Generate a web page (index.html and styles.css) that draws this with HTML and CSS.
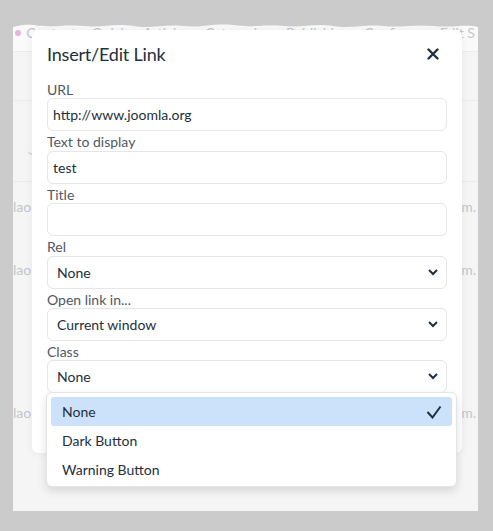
FILE: index.html
```html
<!DOCTYPE html>
<html lang="en">

<head>
    <meta charset="UTF-8">
    <meta name="viewport" content="width=device-width, initial-scale=1.0">
    <title>Insert/Edit Link</title>
    <link rel="stylesheet" href="styles.css">
</head>

<body>
    <div class="shot">
        <svg class="tear" width="465" height="8" viewBox="0 0 465 8" preserveAspectRatio="none">
            <path d="M0 0 H465 V5 C450 2 440 6 420 4 C400 2 390 6 370 4 C350 2 340 7 320 4 C300 1 290 6 270 4 C250 2 240 6 220 3 C200 1 190 6 170 4 C150 2 140 7 120 4 C100 1 90 6 70 4 C50 2 40 6 20 3 C10 2 5 4 0 5 Z" fill="#cbcbcb"/>
        </svg>

        <div class="page">
            <div class="menubar">
                <span class="dot"></span>
                <span>Content</span>
                <span>Quick</span>
                <span>Articles</span>
                <span>Categories</span>
                <span>Publishing</span>
                <span>Configure</span>
                <span>Edit S</span>
            </div>
            <div class="toolbar"></div>
            <div class="filters"><span class="faint-chevron">&#8964;</span></div>
            <div class="row"><span>lao</span><span>m.</span></div>
            <div class="row"><span>lao</span><span>m.</span></div>
            <div class="row row-last"><span>lao</span><span>m.</span></div>
        </div>

        <div class="dialog">
            <div class="dialog-head">
                <h1>Insert/Edit Link</h1>
                <button class="close" aria-label="Close">
                    <svg width="12" height="12" viewBox="0 0 12 12">
                        <path d="M1.5 1.5 L10.5 10.5 M10.5 1.5 L1.5 10.5" stroke="#222f3e" stroke-width="2.4" stroke-linecap="round"/>
                    </svg>
                </button>
            </div>

            <div class="dialog-body">
                <div class="field">
                    <label>URL</label>
                    <div class="input">http://www.joomla.org</div>
                </div>
                <div class="field">
                    <label>Text to display</label>
                    <div class="input">test</div>
                </div>
                <div class="field">
                    <label>Title</label>
                    <div class="input"></div>
                </div>
                <div class="field">
                    <label>Rel</label>
                    <div class="input select">None<svg class="chevron" width="10" height="7" viewBox="0 0 10 7"><path d="M1 1 L5 5 L9 1" fill="none" stroke="#222f3e" stroke-width="2"/></svg></div>
                </div>
                <div class="field">
                    <label>Open link in...</label>
                    <div class="input select">Current window<svg class="chevron" width="10" height="7" viewBox="0 0 10 7"><path d="M1 1 L5 5 L9 1" fill="none" stroke="#222f3e" stroke-width="2"/></svg></div>
                </div>
                <div class="field">
                    <label>Class</label>
                    <div class="input select">None<svg class="chevron" width="10" height="7" viewBox="0 0 10 7"><path d="M1 1 L5 5 L9 1" fill="none" stroke="#222f3e" stroke-width="2"/></svg></div>
                </div>
            </div>
        </div>

        <div class="menu">
            <div class="menu-item active">None
                <svg class="check" width="16" height="14" viewBox="0 0 16 14">
                    <path d="M1.5 7 L6.5 12.5 L14.5 1.5" fill="none" stroke="#222f3e" stroke-width="2"/>
                </svg>
            </div>
            <div class="menu-item">Dark Button</div>
            <div class="menu-item">Warning Button</div>
        </div>
    </div>
</body>

</html>
```

FILE: styles.css
```css
body, html {
    margin: 0;
    padding: 0;
    background-color: #cbcbcb;
    font-family: 'Lato', 'Noto Sans', sans-serif;
    color: #222f3e;
}

.shot {
    position: relative;
    margin: 22px 0 0 13px;
    width: 465px;
    height: 489px;
    background-color: #f5f5f5;
    overflow: hidden;
}

.tear {
    position: absolute;
    top: 0;
    left: 0;
    z-index: 5;
}

/* faded page behind the dialog */
.page {
    color: #c2c6ca;
    font-size: 14px;
}

.menubar {
    display: flex;
    align-items: flex-start;
    justify-content: space-between;
    height: 30px;
    padding: 3px 3px 0 2px;
    box-sizing: border-box;
    line-height: 16px;
    white-space: nowrap;
    background-color: #fafafa;
    border-bottom: 1px solid #ebebeb;
}

.dot {
    display: inline-block;
    width: 6px;
    height: 6px;
    margin-top: 5px;
    border-radius: 50%;
    background-color: #e7b3e4;
    margin-right: -10px;
}

.toolbar {
    height: 48px;
    border-bottom: 1px solid #ebebeb;
}

.filters {
    height: 80px;
    border-bottom: 1px solid #ebebeb;
    padding-left: 12px;
}

.faint-chevron {
    display: inline-block;
    margin-top: 40px;
    color: #d8d8d8;
}

.row {
    display: flex;
    justify-content: space-between;
    height: 63px;
    padding: 16px 2px 0 0;
    box-sizing: border-box;
}

.row-last {
    margin-top: 80px;
}

/* dialog */
.dialog {
    position: absolute;
    left: 19px;
    top: 8px;
    width: 430px;
    height: 423px;
    background-color: #ffffff;
    border-radius: 6px;
    box-shadow: 0 0 10px rgba(0, 0, 0, 0.06);
    z-index: 2;
    box-sizing: border-box;
}

.dialog-head {
    display: flex;
    justify-content: space-between;
    align-items: center;
    padding: 8px 20px 0 15px;
    height: 40px;
    box-sizing: border-box;
}

h1 {
    margin: 0;
    font-size: 18px;
    font-weight: 400;
    letter-spacing: -0.2px;
    line-height: 32px;
    color: #222f3e;
}

.close {
    border: none;
    background: none;
    padding: 0;
    width: 18px;
    height: 18px;
    display: flex;
    align-items: center;
    justify-content: center;
}

.dialog-body {
    padding: 9px 15px 0 15px;
}

.field {
    display: flex;
    flex-direction: column;
}

label {
    font-size: 14px;
    line-height: 16.4px;
    padding-top: 3px;
    color: #4e5966;
}

.input {
    height: 33px;
    box-sizing: border-box;
    border: 1px solid #e6e6e6;
    border-radius: 6px;
    padding: 0 8px 0 5px;
    font-size: 14px;
    line-height: 31px;
    color: #222f3e;
    display: flex;
    align-items: center;
    justify-content: space-between;
}

.select {
    padding-left: 9px;
}

/* dropdown list */
.menu {
    position: absolute;
    left: 33px;
    top: 370px;
    width: 411px;
    height: 95px;
    box-sizing: border-box;
    padding: 4px;
    background-color: #ffffff;
    border: 1px solid #e4e4e4;
    border-radius: 6px;
    box-shadow: 0 4px 10px rgba(0, 0, 0, 0.12);
    z-index: 3;
}

.menu-item {
    display: flex;
    align-items: center;
    justify-content: space-between;
    height: 29px;
    padding: 0 10px 0 11px;
    border-radius: 3px;
    font-size: 14px;
    color: #222f3e;
}

.menu-item.active {
    background-color: #cce2fa;
}
```
